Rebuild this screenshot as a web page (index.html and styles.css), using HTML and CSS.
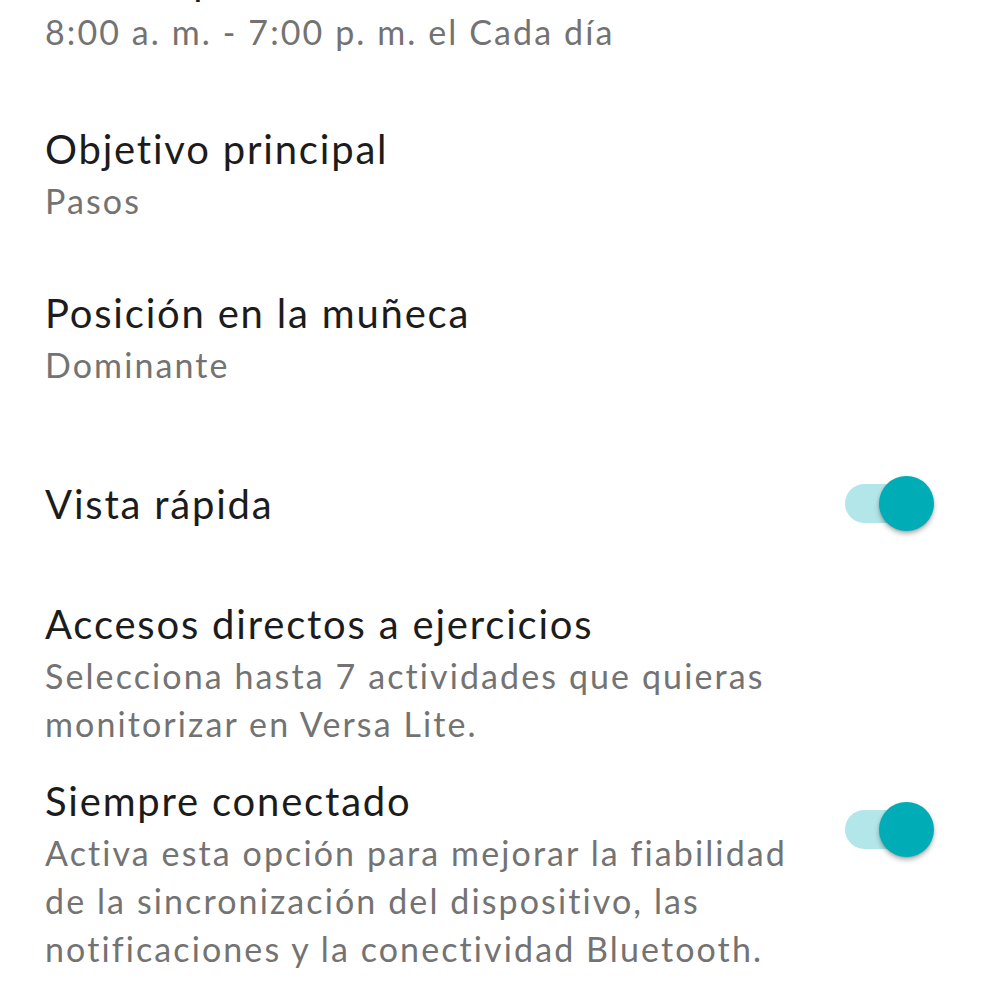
FILE: index.html
```html
<!DOCTYPE html>
<html lang="es">
<head>
<meta charset="utf-8">
<title>Ajustes</title>
<link rel="stylesheet" href="styles.css">
</head>
<body>
<main class="list">
  <section class="row row-first">
    <div class="text">
      <div class="title">Alertas para moverse</div>
      <div class="sub">8:00 a. m. - 7:00 p. m. el Cada día</div>
    </div>
  </section>
  <section class="row row-second">
    <div class="text">
      <div class="title">Objetivo principal</div>
      <div class="sub">Pasos</div>
    </div>
  </section>
  <section class="row row-gap">
    <div class="text">
      <div class="title">Posición en la muñeca</div>
      <div class="sub">Dominante</div>
    </div>
  </section>
  <section class="row row-switch row-center">
    <div class="text">
      <div class="title">Vista rápida</div>
    </div>
    <div class="switch on"><span class="track"></span><span class="knob"></span></div>
  </section>
  <section class="row row-after-switch">
    <div class="text">
      <div class="title">Accesos directos a ejercicios</div>
      <div class="sub">Selecciona hasta 7 actividades que quieras<br>monitorizar en Versa Lite.</div>
    </div>
  </section>
  <section class="row row-tight">
    <div class="text">
      <div class="title">Siempre conectado</div>
      <div class="sub">Activa esta opción para mejorar la fiabilidad<br>de la sincronización del dispositivo, las<br>notificaciones y la conectividad Bluetooth.</div>
    </div>
    <div class="switch on switch-top"><span class="track"></span><span class="knob"></span></div>
  </section>
</main>
</body>
</html>
```

FILE: styles.css
```css
html, body {
  margin: 0;
  padding: 0;
  background: #ffffff;
  overflow: hidden;
}

body {
  width: 999px;
  height: 999px;
  font-family: Lato, "Noto Sans", "Liberation Sans", sans-serif;
  font-variant-ligatures: none;
}

.list {
  padding: 0 65px 0 45px;
}

.row {
  display: flex;
  align-items: flex-start;
  justify-content: space-between;
}

.row-center {
  align-items: center;
}

.row-first {
  margin-top: -44px;
}

.row-second {
  margin-top: 69px;
}

.row-gap {
  margin-top: 64px;
}

.row-switch {
  margin-top: 87px;
}

.row-after-switch {
  margin-top: 69px;
}

.row-tight {
  margin-top: 29px;
}

.text {
  flex: 1;
  min-width: 0;
}

.title {
  font-size: 40px;
  line-height: 48px;
  letter-spacing: 1.8px;
  color: #1c1c1c;
  white-space: nowrap;
}

.sub {
  margin-top: 4px;
  font-size: 34px;
  line-height: 48px;
  letter-spacing: 2.1px;
  color: #737373;
  white-space: nowrap;
}

.switch {
  position: relative;
  width: 89px;
  height: 55px;
  flex: none;
}

.switch-top {
  margin-top: 25px;
}

.track {
  position: absolute;
  left: 0;
  top: 8px;
  width: 80px;
  height: 39px;
  border-radius: 20px;
  background: #b2e6e9;
}

.knob {
  position: absolute;
  right: 0;
  top: 0;
  width: 55px;
  height: 55px;
  border-radius: 50%;
  background: #00adb7;
  box-shadow: 0 3px 5px rgba(0, 0, 0, 0.28), 0 1px 2px rgba(0, 0, 0, 0.12);
}
```
